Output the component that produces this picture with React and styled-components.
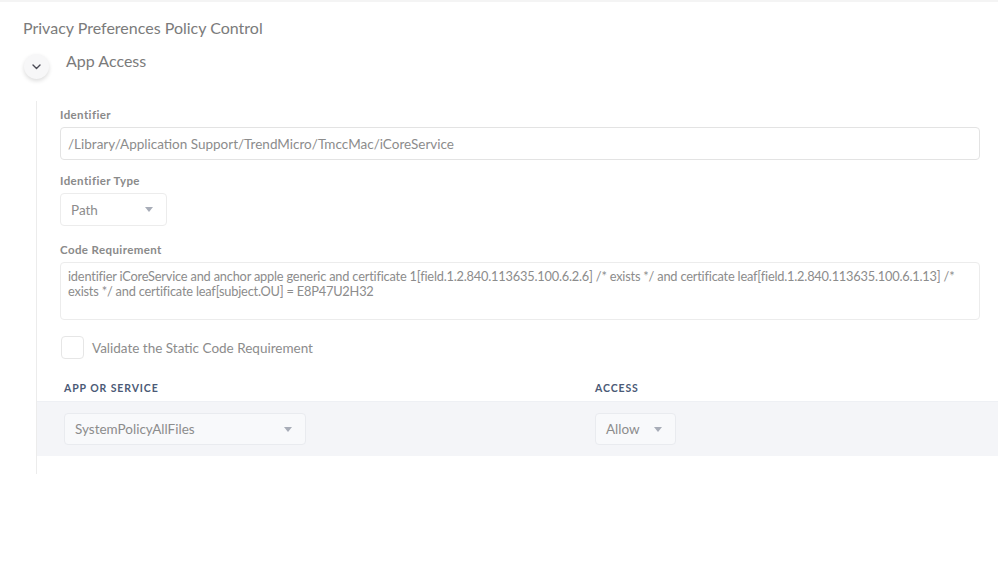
import React from "react";
import styled, { createGlobalStyle } from "styled-components";

const GlobalStyle = createGlobalStyle`
  html, body {
    margin: 0;
    padding: 0;
    background: #ffffff;
  }
  body {
    font-family: Lato, "Open Sans", sans-serif;
    color: #888888;
  }
`;

const Page = styled.div`
  width: 998px;
  height: 568px;
  box-sizing: border-box;
  border-top: 2px solid #f4f4f4;
  padding-top: 16px;
  overflow: hidden;
`;

const Title = styled.h1`
  margin: 0 0 0 23px;
  font-size: 16px;
  font-weight: 400;
  color: #7b7b7b;
  line-height: 20px;
`;

const SectionHeader = styled.div`
  display: flex;
  align-items: center;
  gap: 17px;
  margin: 12px 0 0 24px;
`;

const ToggleButton = styled.button`
  width: 25px;
  height: 25px;
  border-radius: 50%;
  border: none;
  padding: 0;
  background: #f7f7f8;
  box-shadow: 0 2px 4px rgba(0, 0, 0, 0.14);
  display: flex;
  align-items: center;
  justify-content: center;
  margin-top: 4px;
`;

const SectionTitle = styled.h2`
  margin: 0 0 8px 0;
  font-size: 16px;
  font-weight: 400;
  color: #7b7b7b;
`;

const Body = styled.div`
  margin: 22px 0 0 36px;
  border-left: 1px solid #ececec;
  padding: 7px 0 18px 0;
`;

const Field = styled.div`
  padding-left: 23px;
  padding-right: 18px;
  margin-bottom: ${(p) => p.$gap}px;
`;

const Label = styled.div`
  font-size: 11.5px;
  font-weight: 700;
  color: #8a8a8a;
  letter-spacing: 0.4px;
  line-height: 14px;
  margin-bottom: 5px;
`;

const Input = styled.div`
  height: 33px;
  box-sizing: border-box;
  border: 1px solid #e3e3e3;
  border-radius: 4px;
  padding: 0 7px;
  display: flex;
  align-items: center;
  font-size: 13.5px;
  color: #8c8c8c;
`;

const TextArea = styled.div`
  height: 58px;
  box-sizing: border-box;
  border: 1px solid #ececec;
  border-radius: 4px;
  padding: 6px 7px;
  font-size: 12.8px;
  letter-spacing: -0.2px;
  line-height: 15px;
  color: #8c8c8c;
`;

const Select = styled.div`
  width: ${(p) => p.$width}px;
  height: ${(p) => p.$height}px;
  box-sizing: border-box;
  border: 1px solid ${(p) => (p.$muted ? "#e9ebef" : "#ececec")};
  background: ${(p) => (p.$muted ? "#f8f9fb" : "#ffffff")};
  border-radius: 4px;
  display: flex;
  align-items: center;
  justify-content: space-between;
  padding: 0 13px 0 10px;
  font-size: 13.5px;
  color: #8c8c8c;
`;

const Caret = styled.span`
  width: 0;
  height: 0;
  border-left: 4px solid transparent;
  border-right: 4px solid transparent;
  border-top: 5px solid #a8adb8;
`;

const CheckRow = styled.label`
  display: flex;
  align-items: center;
  gap: 8px;
  padding-left: 24px;
  margin-top: 16px;
  font-size: 13.5px;
  color: #8c8c8c;
`;

const CheckBox = styled.span`
  width: 23px;
  height: 23px;
  box-sizing: border-box;
  border: 1px solid #e6e6e6;
  border-radius: 4px;
  background: #fff;
`;

const TableHead = styled.div`
  display: grid;
  grid-template-columns: 531px 1fr;
  padding-left: 27px;
  margin-top: 16px;
  height: 26px;
  align-items: center;
`;

const HeadCell = styled.div`
  font-size: 10.5px;
  font-weight: 700;
  color: #4b5a76;
  letter-spacing: 0.9px;
  text-transform: uppercase;
`;

const TableRow = styled.div`
  display: grid;
  grid-template-columns: 531px 1fr;
  align-items: center;
  padding-left: 27px;
  height: 54px;
  background: #f4f5f8;
  border-top: 1px solid #eef0f4;
`;

function Chevron() {
  return (
    <svg width="9" height="6" viewBox="0 0 9 6" fill="none">
      <path d="M1 1l3.5 3.5L8 1" stroke="#4a4a55" strokeWidth="1.4" strokeLinecap="round" strokeLinejoin="round" />
    </svg>
  );
}

export default function App() {
  return (
    <Page>
      <GlobalStyle />
      <Title>Privacy Preferences Policy Control</Title>
      <SectionHeader>
        <ToggleButton>
          <Chevron />
        </ToggleButton>
        <SectionTitle>App Access</SectionTitle>
      </SectionHeader>
      <Body>
        <Field $gap={14}>
          <Label>Identifier</Label>
          <Input>/Library/Application Support/TrendMicro/TmccMac/iCoreService</Input>
        </Field>
        <Field $gap={17}>
          <Label>Identifier Type</Label>
          <Select $width={107} $height={33}>
            Path
            <Caret />
          </Select>
        </Field>
        <Field $gap={0}>
          <Label>Code Requirement</Label>
          <TextArea>
            identifier iCoreService and anchor apple generic and certificate 1[field.1.2.840.113635.100.6.2.6] /* exists */ and certificate leaf[field.1.2.840.113635.100.6.1.13] /* exists */ and certificate leaf[subject.OU] = E8P47U2H32
          </TextArea>
        </Field>
        <CheckRow>
          <CheckBox />
          Validate the Static Code Requirement
        </CheckRow>
        <TableHead>
          <HeadCell>App or Service</HeadCell>
          <HeadCell>Access</HeadCell>
        </TableHead>
        <TableRow>
          <Select $width={242} $height={32} $muted>
            SystemPolicyAllFiles
            <Caret />
          </Select>
          <Select $width={81} $height={32} $muted>
            Allow
            <Caret />
          </Select>
        </TableRow>
      </Body>
    </Page>
  );
}
